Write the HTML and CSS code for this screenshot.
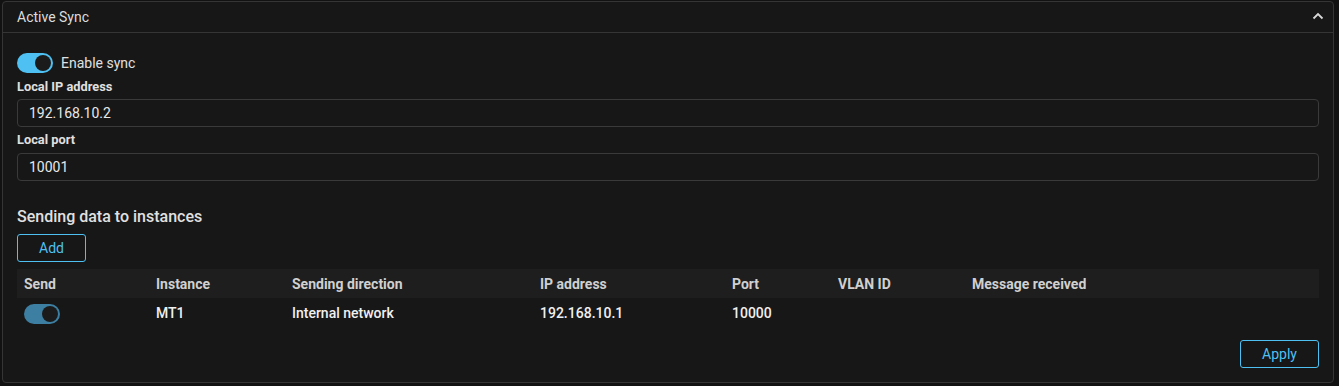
FILE: index.html
```html
<!DOCTYPE html>
<html>
<head>
<meta charset="utf-8">
<link rel="stylesheet" href="styles.css">
</head>
<body>
<section class="card">
  <header class="card-head">
    <span class="card-title">Active Sync</span>
    <svg class="chev" width="12" height="8" viewBox="0 0 12 8"><path d="M1.5 6.5 L6 2 L10.5 6.5" fill="none" stroke="#d8d8d8" stroke-width="1.8"/></svg>
  </header>
  <div class="card-body">
    <label class="switch-row">
      <span class="toggle on"><span class="knob"></span></span>
      <span class="switch-label">Enable sync</span>
    </label>
    <div class="field first">
      <div class="field-label">Local IP address</div>
      <div class="input">192.168.10.2</div>
    </div>
    <div class="field second">
      <div class="field-label">Local port</div>
      <div class="input">10001</div>
    </div>
    <h3 class="section-title">Sending data to instances</h3>
    <button class="btn">Add</button>
    <div class="table">
      <div class="tr th">
        <div>Send</div><div>Instance</div><div>Sending direction</div><div>IP address</div><div>Port</div><div>VLAN ID</div><div>Message received</div>
      </div>
      <div class="tr td">
        <div><span class="toggle row-on"><span class="knob"></span></span></div>
        <div>MT1</div><div>Internal network</div><div>192.168.10.1</div><div>10000</div><div></div><div></div>
      </div>
    </div>
    <div class="actions"><button class="btn apply">Apply</button></div>
  </div>
</section>
</body>
</html>
```
FILE: styles.css
```css
html, body { margin: 0; padding: 0; }
body {
  background: #121212;
  font-family: Roboto, "Liberation Sans", sans-serif;
  color: #e6e6e6;
  width: 1339px;
  height: 386px;
  overflow: hidden;
}
.card {
  margin: 1px 5px 0 2px;
  height: 382px;
  background: #171717;
  border: 1px solid #353535;
  border-radius: 4px;
  box-sizing: border-box;
  width: 1332px;
}
.card-head {
  height: 30px;
  border-bottom: 1px solid #353535;
  display: flex;
  align-items: center;
  justify-content: space-between;
  padding: 0 9px 0 14px;
}
.card-title { font-size: 14px; color: #dcdcdc; }
.chev { margin-top: -2px; }
.card-body { padding: 19px 14px 0 14px; }
.switch-row { display: flex; align-items: center; gap: 8px; height: 22px; }
.toggle {
  display: inline-block;
  width: 36px; height: 20px;
  border-radius: 10px;
  position: relative;
  box-sizing: border-box;
}
.toggle .knob {
  position: absolute;
  right: 2px; top: 2px;
  width: 16px; height: 16px;
  border-radius: 50%;
  background: #1b1b1b;
  box-sizing: border-box;
}
.toggle.on { background: #4fc0f2; }
.toggle.row-on { background: #3d7fa2; }
.switch-label { font-size: 14px; color: #e0e0e0; }
.field-label { font-size: 12.8px; font-weight: 700; color: #e0e0e0; line-height: 16px; }
.field.first { margin-top: 5px; }
.field.second { margin-top: 5px; }
.input {
  margin-top: 4px;
  height: 28px;
  border: 1px solid #3a3a3a;
  border-radius: 4px;
  box-sizing: border-box;
  padding: 0 11px;
  display: flex; align-items: center;
  font-size: 14px; color: #e8e8e8;
}
.field.second .input { margin-top: 5px; }
.section-title {
  margin: 26px 0 0 0;
  font-size: 16px; font-weight: 500; color: #e0e0e0;
  line-height: 20px;
}
.btn {
  display: block;
  background: transparent;
  border: 1px solid #4fc0f2;
  color: #4fc0f2;
  border-radius: 3px;
  font-family: Roboto, "Liberation Sans", sans-serif;
  font-size: 14px;
  height: 28px;
  width: 69px;
  margin-top: 7px;
  padding: 0;
  cursor: pointer;
}
.table { margin-top: 7px; }
.tr {
  display: grid;
  grid-template-columns: 132px 136px 248px 192px 106px 134px 1fr;
  align-items: center;
  padding-left: 7px;
}
.th { background: #1e1e1e; height: 29px; font-size: 14px; font-weight: 700; color: #d0d0d0; }
.td { height: 30px; font-size: 14px; font-weight: 500; color: #f0f0f0; }
.td .toggle { vertical-align: middle; margin-top: 2px; }
.actions { display: flex; justify-content: flex-end; margin-top: 12px; }
.btn.apply { width: 79px; margin-top: 0; }
```
